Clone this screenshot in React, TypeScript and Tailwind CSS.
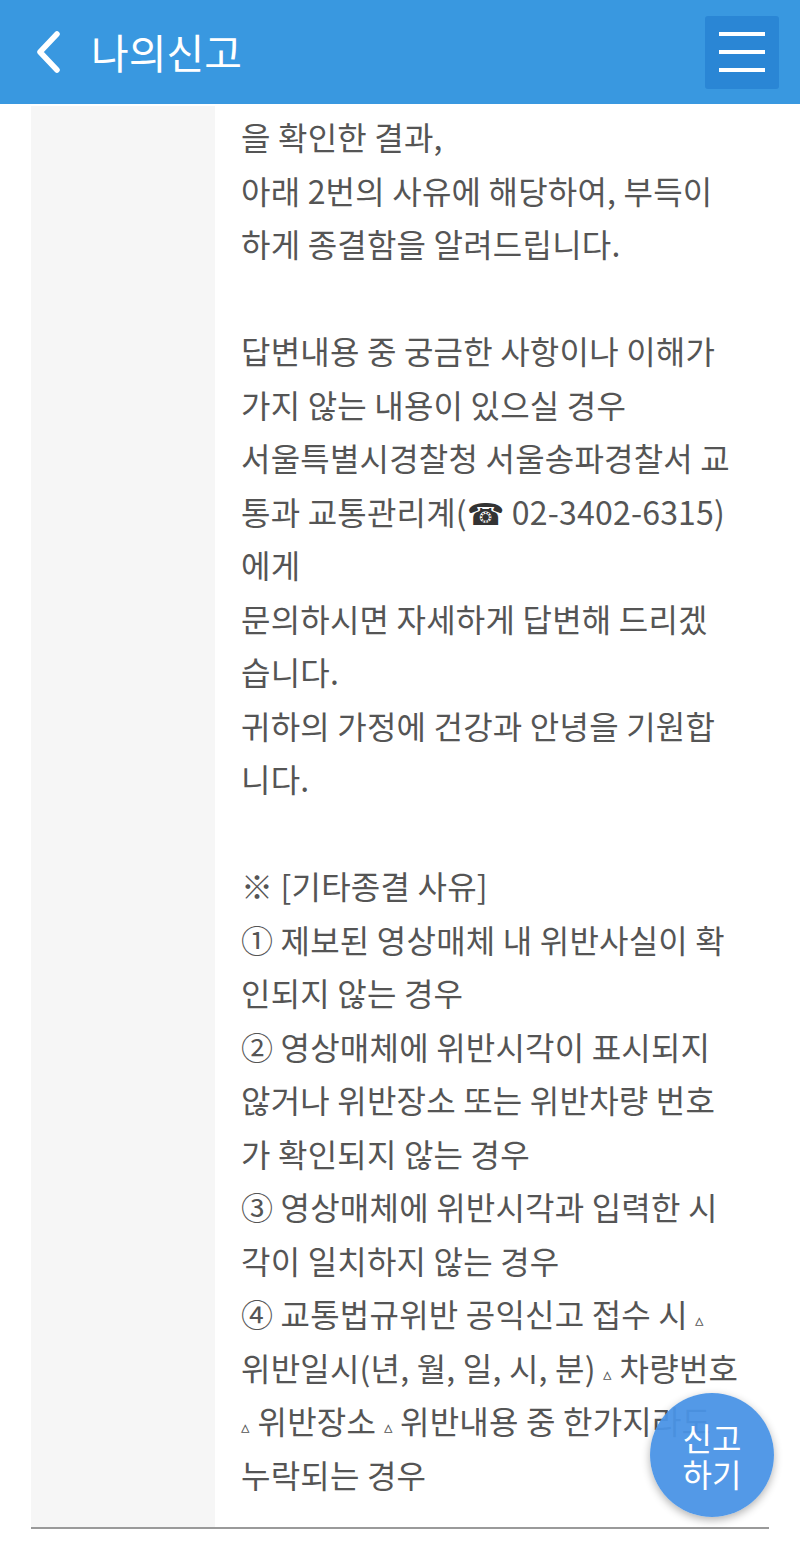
const LINES: string[] = [
  "을 확인한 결과,",
  "아래 2번의 사유에 해당하여, 부득이",
  "하게 종결함을 알려드립니다.",
  "",
  "답변내용 중 궁금한 사항이나 이해가",
  "가지 않는 내용이 있으실 경우",
  "서울특별시경찰청 서울송파경찰서 교",
  "통과 교통관리계(☎ 02-3402-6315)",
  "에게",
  "문의하시면 자세하게 답변해 드리겠",
  "습니다.",
  "귀하의 가정에 건강과 안녕을 기원합",
  "니다.",
  "",
  "※ [기타종결 사유]",
  "① 제보된 영상매체 내 위반사실이 확",
  "인되지 않는 경우",
  "② 영상매체에 위반시각이 표시되지",
  "않거나 위반장소 또는 위반차량 번호",
  "가 확인되지 않는 경우",
  "③ 영상매체에 위반시각과 입력한 시",
  "각이 일치하지 않는 경우",
  "④ 교통법규위반 공익신고 접수 시 ▵",
  "위반일시(년, 월, 일, 시, 분) ▵ 차량번호",
  "▵ 위반장소 ▵ 위반내용 중 한가지라도",
  "누락되는 경우",
];

function Line({ text }: { text: string }) {
  if (!text) return <div className="h-[53.5px]" />;
  const parts = text.split(/(▵|☎)/);
  return (
    <div className="h-[53.5px] whitespace-nowrap leading-[53.5px]">
      {parts.map((p, i) =>
        p === "▵" ? (
          <span key={i} className="text-[17px] align-middle">
            ▵
          </span>
        ) : p === "☎" ? (
          <span key={i} className="font-['DejaVu_Sans'] text-[#333] text-[30px]">
            ☎
          </span>
        ) : (
          <span key={i}>{p}</span>
        ),
      )}
    </div>
  );
}

export default function App() {
  return (
    <div className="relative h-[1560px] w-[800px] overflow-hidden bg-white font-['Noto_Sans_CJK_KR','Noto_Sans',sans-serif]">
      <header className="flex h-[104px] items-center bg-[#3998e0] pl-[33px] pr-[21px]">
        <svg width="30" height="42" viewBox="0 0 30 42" className="shrink-0">
          <path d="M24 3 L7 21 L24 39" fill="none" stroke="#fff" strokeWidth="5.5" strokeLinecap="round" strokeLinejoin="round" />
        </svg>
        <h1 className="ml-[28px] text-[41px] font-normal text-white">나의신고</h1>
        <button className="ml-auto flex h-[73px] w-[74px] flex-col items-center justify-center gap-[14px] rounded-[3px] bg-[#2a86d5]">
          <span className="block h-[4px] w-[46px] bg-white" />
          <span className="block h-[4px] w-[46px] bg-white" />
          <span className="block h-[4px] w-[46px] bg-white" />
        </button>
      </header>

      <div className="mx-[31px] mt-[2px] flex border-b-2 border-[#9a9a9a]">
        <div className="w-[184px] shrink-0 bg-[#f6f6f6]" />
        <div className="flex-1 pb-[26px] pl-[26px] pt-[4px] text-[32px] tracking-[0.2px] text-[#555]">
          {LINES.map((l, i) => (
            <Line key={i} text={l} />
          ))}
        </div>
      </div>

      <button className="absolute left-[650px] top-[1393px] flex h-[124px] w-[124px] flex-col items-center justify-center rounded-full bg-[#4a93e6]/95 text-[32px] leading-[36px] text-white shadow-[0_3px_8px_rgba(0,0,0,0.3)]">
        <span>신고</span>
        <span>하기</span>
      </button>
    </div>
  );
}
